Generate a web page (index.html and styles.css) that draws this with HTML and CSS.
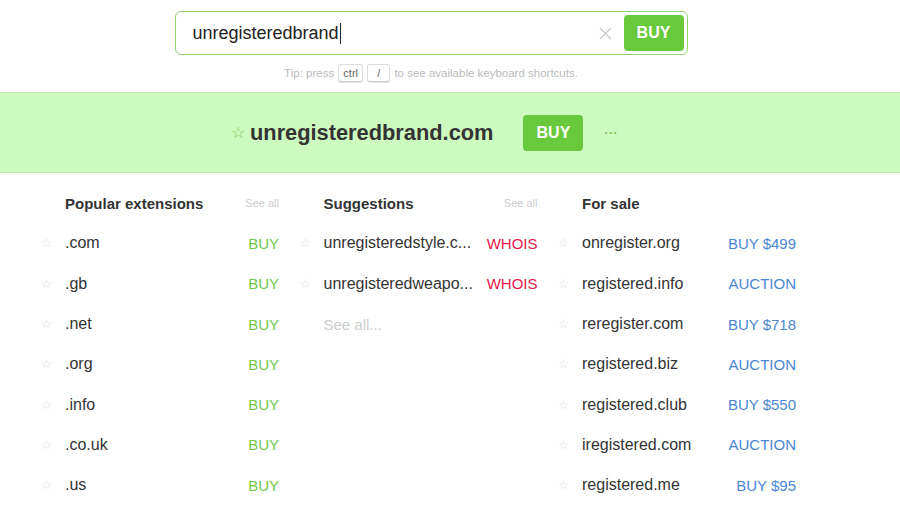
FILE: index.html
```html
<!DOCTYPE html>
<html lang="en">
<head>
  <meta charset="UTF-8">
  <meta name="viewport" content="width=device-width, initial-scale=1.0">
  <title>Domain Search</title>
  <link rel="stylesheet" href="styles.css">
</head>
<body>
  <div class="page">
    <form class="search">
      <span class="search-input">unregisteredbrand<span class="caret"></span></span>
      <svg class="clear" width="13" height="13" viewBox="0 0 13 13">
        <path d="M1 1 L12 12 M12 1 L1 12" stroke="#c8c8c8" stroke-width="1.3" fill="none"/>
      </svg>
      <button type="button" class="btn">BUY</button>
    </form>
    <p class="tip">Tip: press <kbd>ctrl</kbd> <kbd>/</kbd> to see available keyboard shortcuts.</p>
  </div>

  <div class="result">
    <span class="result-star">&#9734;</span>
    <span class="result-name">unregisteredbrand.com</span>
    <button type="button" class="btn">BUY</button>
    <span class="more">&middot;&middot;&middot;</span>
  </div>

  <div class="columns">
    <div class="col">
      <div class="col-head"><h3>Popular extensions</h3><a class="see-all">See all</a></div>
      <div class="row"><span class="star">&#9734;</span><span class="name">.com</span><a class="act buy">BUY</a></div>
      <div class="row"><span class="star">&#9734;</span><span class="name">.gb</span><a class="act buy">BUY</a></div>
      <div class="row"><span class="star">&#9734;</span><span class="name">.net</span><a class="act buy">BUY</a></div>
      <div class="row"><span class="star">&#9734;</span><span class="name">.org</span><a class="act buy">BUY</a></div>
      <div class="row"><span class="star">&#9734;</span><span class="name">.info</span><a class="act buy">BUY</a></div>
      <div class="row"><span class="star">&#9734;</span><span class="name">.co.uk</span><a class="act buy">BUY</a></div>
      <div class="row"><span class="star">&#9734;</span><span class="name">.us</span><a class="act buy">BUY</a></div>
    </div>

    <div class="col">
      <div class="col-head"><h3>Suggestions</h3><a class="see-all">See all</a></div>
      <div class="row"><span class="star">&#9734;</span><span class="name">unregisteredstyle.c...</span><a class="act whois">WHOIS</a></div>
      <div class="row"><span class="star">&#9734;</span><span class="name">unregisteredweapo...</span><a class="act whois">WHOIS</a></div>
      <div class="row"><span class="star"></span><span class="name muted">See all...</span></div>
    </div>

    <div class="col">
      <div class="col-head"><h3>For sale</h3></div>
      <div class="row"><span class="star">&#9734;</span><span class="name">onregister.org</span><a class="act sale">BUY $499</a></div>
      <div class="row"><span class="star">&#9734;</span><span class="name">registered.info</span><a class="act sale">AUCTION</a></div>
      <div class="row"><span class="star">&#9734;</span><span class="name">reregister.com</span><a class="act sale">BUY $718</a></div>
      <div class="row"><span class="star">&#9734;</span><span class="name">registered.biz</span><a class="act sale">AUCTION</a></div>
      <div class="row"><span class="star">&#9734;</span><span class="name">registered.club</span><a class="act sale">BUY $550</a></div>
      <div class="row"><span class="star">&#9734;</span><span class="name">iregistered.com</span><a class="act sale">AUCTION</a></div>
      <div class="row"><span class="star">&#9734;</span><span class="name">registered.me</span><a class="act sale">BUY $95</a></div>
    </div>
  </div>
</body>
</html>
```

FILE: styles.css
```css
body {
  font-family: 'Liberation Sans', Arial, sans-serif;
  background-color: #fff;
  color: #333;
  margin: 0;
  padding: 0;
}
.page {
  width: 862px;
  padding-top: 11px;
}
.search {
  width: 513px;
  height: 44px;
  margin: 0 auto;
  box-sizing: border-box;
  border: 1px solid #93d46f;
  border-radius: 6px;
  display: flex;
  align-items: center;
  padding: 0 3px 0 17px;
}
.search-input {
  flex: 1;
  font-size: 18px;
  color: #222;
  display: flex;
  align-items: center;
}
.caret {
  display: inline-block;
  width: 1px;
  height: 21px;
  background-color: #222;
  margin-left: 1px;
}
.clear {
  margin-right: 12px;
}
.btn {
  width: 60px;
  height: 36px;
  background-color: #69c93c;
  color: white;
  font-family: inherit;
  font-size: 16px;
  font-weight: bold;
  border: none;
  border-radius: 4px;
  padding: 0;
}
.tip {
  margin: 9px 0 0;
  text-align: center;
  font-size: 11.5px;
  color: #bbb;
}
kbd {
  display: inline-block;
  font-family: inherit;
  font-size: 11px;
  color: #666;
  padding: 2px 4px;
  min-width: 13px;
  text-align: center;
  border: 1px solid #ddd;
  border-bottom-color: #ccc;
  border-radius: 3px;
  box-shadow: 0 1px 0 #e4e4e4;
  margin: 0 1px;
}
kbd + kbd {
  margin-left: 0;
}
.result {
  margin-top: 10px;
  height: 79px;
  background-color: #cdfabe;
  border-top: 1px solid #bfeeae;
  border-bottom: 1px solid #bfeeae;
  display: flex;
  align-items: center;
  padding-left: 231px;
}
.result-star {
  color: #7fcf5c;
  font-size: 16px;
  margin-right: 5px;
}
.result-name {
  font-size: 21.8px;
  font-weight: bold;
  color: #333;
  margin-right: 30px;
}
.more {
  color: #79c95a;
  font-size: 12px;
  font-weight: bold;
  margin-left: 21px;
  letter-spacing: 0.5px;
}
.columns {
  display: grid;
  grid-template-columns: repeat(3, 238px);
  column-gap: 20.5px;
  padding: 10px 0 0 41px;
}
.col-head, .row {
  display: flex;
  align-items: center;
  height: 40.3px;
}
.col-head {
  padding-left: 24px;
}
.col-head h3 {
  flex: 1;
  margin: 0;
  font-size: 15px;
  font-weight: bold;
  color: #333;
}
.see-all {
  font-size: 11px;
  color: #ccc;
}
.star {
  width: 24px;
  color: #ddd;
  font-size: 12px;
}
.name {
  flex: 1;
  font-size: 16px;
  color: #333;
  white-space: nowrap;
}
.name.muted {
  color: #ccc;
  font-size: 15px;
}
.act {
  font-size: 15px;
}
.buy {
  color: #70c849;
}
.whois {
  color: #e3164b;
}
.sale {
  color: #4a86d6;
}
```
